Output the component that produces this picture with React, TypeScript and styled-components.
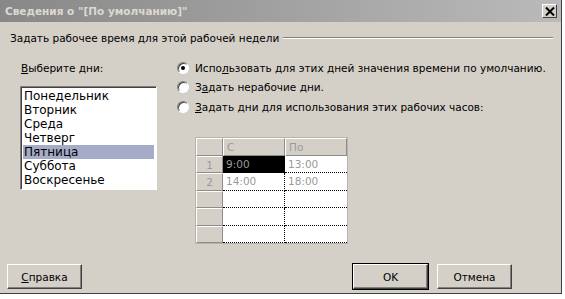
import React from "react";
import styled, { createGlobalStyle } from "styled-components";

const GlobalStyle = createGlobalStyle`
    html, body {
        margin: 0;
        padding: 0;
        background: #ffffff;
    }
    body {
        font-family: "DejaVu Sans", "Noto Sans", sans-serif;
        font-size: 10.5px;
        color: #000;
    }
`;

const days = ["Понедельник", "Вторник", "Среда", "Четверг", "Пятница", "Суббота", "Воскресенье"];
const selectedDay = 4;

const hours = [
    ["9:00", "13:00"],
    ["14:00", "18:00"],
    ["", ""],
    ["", ""],
    ["", ""],
];

function App() {
    return (
        <>
            <GlobalStyle />
            <Window>
                <TitleBar>
                    <Title>Сведения о "[По умолчанию]"</Title>
                    <CloseButton>
                        <svg width="10" height="9" viewBox="0 0 10 9">
                            <path d="M1 0.5 L9 8.5 M9 0.5 L1 8.5" stroke="#000" strokeWidth="2" />
                        </svg>
                    </CloseButton>
                </TitleBar>
                <Body>
                    <GroupHeader>
                        <span>Задать рабочее время для этой рабочей недели</span>
                        <Etched />
                    </GroupHeader>
                    <Content>
                        <DaysColumn>
                            <Label>
                                <u>В</u>ыберите дни:
                            </Label>
                            <ListBox>
                                {days.map((d, i) => (
                                    <ListItem key={d} $selected={i === selectedDay}>
                                        {d}
                                    </ListItem>
                                ))}
                            </ListBox>
                        </DaysColumn>
                        <OptionsColumn>
                            <RadioRow>
                                <Radio $checked />
                                <span>
                                    Испо<u>л</u>ьзовать для этих дней значения времени по умолчанию.
                                </span>
                            </RadioRow>
                            <RadioRow>
                                <Radio />
                                <span>
                                    З<u>а</u>дать нерабочие дни.
                                </span>
                            </RadioRow>
                            <RadioRow>
                                <Radio />
                                <span>
                                    <u>З</u>адать дни для использования этих рабочих часов:
                                </span>
                            </RadioRow>
                            <Grid>
                                <HeadCell />
                                <HeadCell>С</HeadCell>
                                <HeadCell>По</HeadCell>
                                {hours.map((row, r) => (
                                    <React.Fragment key={r}>
                                        <RowHead>{row[0] ? r + 1 : ""}</RowHead>
                                        <DataCell $active={r === 0}>{row[0]}</DataCell>
                                        <DataCell $last>{row[1]}</DataCell>
                                    </React.Fragment>
                                ))}
                            </Grid>
                        </OptionsColumn>
                    </Content>
                    <Footer>
                        <Button>
                            <u>С</u>правка
                        </Button>
                        <FooterRight>
                            <Button $default>OK</Button>
                            <Button>Отмена</Button>
                        </FooterRight>
                    </Footer>
                </Body>
            </Window>
        </>
    );
}

export default App;

const Window = styled.div`
    box-sizing: border-box;
    width: 562px;
    height: 294px;
    background: #d4d0c8;
    border-right: 1px solid #404040;
    border-bottom: 1px solid #404040;
    display: flex;
    flex-direction: column;
`;

const TitleBar = styled.div`
    height: 22px;
    flex: none;
    display: flex;
    align-items: center;
    justify-content: space-between;
    padding: 0 4px 0 5px;
    background: linear-gradient(to right, #888888, #bababa);
`;

const Title = styled.span`
    color: #dcd9d2;
    font-weight: bold;
    font-size: 10.5px;
`;

const CloseButton = styled.div`
    box-sizing: border-box;
    width: 15px;
    height: 14px;
    background: #d4d0c8;
    border: 1px solid;
    border-color: #ffffff #404040 #404040 #ffffff;
    display: flex;
    align-items: center;
    justify-content: center;
`;

const Body = styled.div`
    flex: 1;
    display: flex;
    flex-direction: column;
    padding: 9px 8px 4px 10px;
`;

const GroupHeader = styled.div`
    display: flex;
    align-items: center;
    gap: 4px;
    height: 14px;
`;

const Etched = styled.div`
    flex: 1;
    height: 0;
    border-top: 1px solid #808080;
    border-bottom: 1px solid #ffffff;
`;

const Content = styled.div`
    display: flex;
    margin-top: 16px;
    gap: 20px;
`;

const DaysColumn = styled.div`
    width: 137px;
    margin-left: 10px;
    display: flex;
    flex-direction: column;
`;

const Label = styled.div`
    padding-left: 1px;
    height: 14px;
    line-height: 14px;
`;

const ListBox = styled.div`
    box-sizing: border-box;
    margin-top: 11px;
    height: 104px;
    background: #ffffff;
    border: 1px solid;
    border-color: #808080 #ffffff #ffffff #808080;
    box-shadow: inset 1px 1px 0 #404040;
    padding: 2px 2px;
    overflow: hidden;
    font-size: 12px;
`;

const ListItem = styled.div<{ $selected?: boolean }>`
    height: 14px;
    line-height: 14px;
    padding-left: 1px;
    background: ${({ $selected }) => ($selected ? "#a6abc7" : "transparent")};
`;

const OptionsColumn = styled.div`
    display: flex;
    flex-direction: column;
    padding-top: 3px;
`;

const RadioRow = styled.div`
    display: flex;
    align-items: center;
    gap: 6px;
    height: 19.5px;
    margin-top: -6px;
    margin-bottom: 6px;
`;

const Radio = styled.span<{ $checked?: boolean }>`
    box-sizing: border-box;
    width: 12px;
    height: 12px;
    border-radius: 50%;
    background: #ffffff;
    border: 1px solid;
    border-color: #808080 #ffffff #ffffff #808080;
    box-shadow: inset 1px 1px 0 #404040;
    display: flex;
    align-items: center;
    justify-content: center;

    &::after {
        content: "";
        width: 4px;
        height: 4px;
        border-radius: 50%;
        background: ${({ $checked }) => ($checked ? "#000" : "transparent")};
    }
`;

const Grid = styled.div`
    display: grid;
    grid-template-columns: 27px 62px 62px;
    grid-template-rows: 18px repeat(5, 17.5px);
    width: 151px;
    margin-top: 14px;
    margin-left: 18px;
    border: 1px solid #b8b4ac;
    background: #ffffff;
    color: #9a9a9a;
`;

const HeadCell = styled.div`
    box-sizing: border-box;
    background: #d4d0c8;
    border-left: 1px solid #ffffff;
    border-top: 1px solid #ffffff;
    border-right: 1px solid #8c8c8c;
    border-bottom: 1px solid #8c8c8c;
    padding-left: 3px;
    line-height: 16px;
`;

const RowHead = styled.div`
    box-sizing: border-box;
    background: #d4d0c8;
    border-left: 1px solid #ffffff;
    border-top: 1px solid #ffffff;
    border-right: 1px solid #8c8c8c;
    border-bottom: 1px solid #8c8c8c;
    text-align: center;
    line-height: 16px;
`;

const DataCell = styled.div<{ $active?: boolean; $last?: boolean }>`
    box-sizing: border-box;
    border-bottom: 1px dotted #000;
    border-right: ${({ $last }) => ($last ? "none" : "1px dotted #000")};
    background: ${({ $active }) => ($active ? "#000" : "#fff")};
    padding-left: 3px;
    line-height: 16px;
`;

const Footer = styled.div`
    margin-top: auto;
    display: flex;
    justify-content: space-between;
    margin-left: -3px;
    padding-right: 41px;
`;

const FooterRight = styled.div`
    display: flex;
    gap: 9px;
`;

const Button = styled.div<{ $default?: boolean }>`
    box-sizing: border-box;
    width: 75px;
    height: 25px;
    display: flex;
    align-items: center;
    justify-content: center;
    background: #d4d0c8;
    border: 1px solid;
    border-color: #ffffff #404040 #404040 #ffffff;
    box-shadow: inset -1px -1px 0 #808080;
    outline: ${({ $default }) => ($default ? "1px solid #000" : "none")};
`;
